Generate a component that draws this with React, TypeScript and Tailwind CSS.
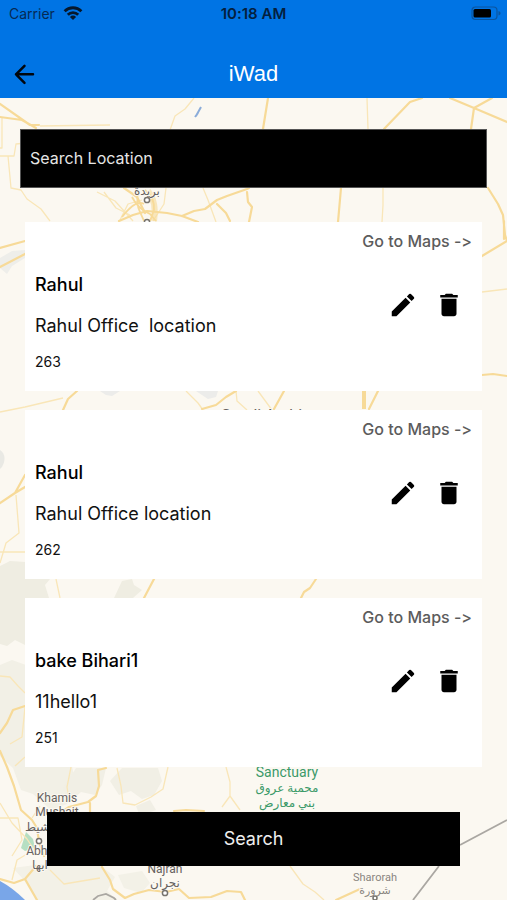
import { MdDelete, MdEdit } from "react-icons/md";

const locations = [
  { id: 263, name: "Rahul", address: "Rahul Office  location" },
  { id: 262, name: "Rahul", address: "Rahul Office location" },
  { id: 251, name: "bake Bihari1", address: "11hello1" },
];

function StatusBar() {
  return <div className="grid h-7 grid-cols-3 items-center px-1 text-sm text-[#062a55]">
    <div className="flex items-center gap-2 pl-[5px]">
      <span>Carrier</span>
      <svg className="h-4 w-5" viewBox="0 0 20 16" fill="none" stroke="#06182c" strokeWidth="2.8" aria-hidden="true">
        <path d="M1.6 5.200a12 12 0 0 1 16.8 0" />
        <path d="M4.8 8.700a7.4 7.4 0 0 1 10.4 0" />
        <path d="M10 14 6.900 10.900a4.4 4.4 0 0 1 6.200 0z" fill="#06182c" stroke="none" />
      </svg>
    </div>
    <span className="text-center text-[15px] font-semibold text-[#04203f]">10:18 AM</span>
    <svg className="h-4 w-8 justify-self-end" viewBox="0 0 32 16" aria-hidden="true">
      <rect x="1" y="1" width="25" height="12.5" rx="3.5" fill="none" stroke="#0a559f" strokeWidth="1.2" />
      <rect x="2.5" y="3" width="17.500" height="8.5" rx="1.5" fill="#000" />
      <path d="M27.500 5c1.600.5 2 1.500 2 2.300s-.4 1.800-2 2.300z" fill="#0a559f" />
    </svg>
  </div>;
}

function Header() {
  return <header className="relative z-10 bg-[#0074e4]">
    <StatusBar />
    <div className="grid h-[70px] grid-cols-3 items-center px-3 pt-[22px]">
      <button type="button" aria-label="Back" className="h-6 w-6">
        <svg viewBox="0 0 24 24" fill="none" stroke="#00060e" strokeWidth="2.5" strokeLinecap="round" strokeLinejoin="round">
          <path d="M12.500 3.800 4 12.300l8.500 8.500M4 12.300h17" />
        </svg>
      </button>
      <h1 className="text-center font-['Liberation_Sans',sans-serif] text-[22px] leading-6 text-white">iWad</h1>
    </div>
  </header>;
}

function MapBackground() {
  return <svg className="absolute inset-0 h-full w-full" viewBox="0 98 507 802" preserveAspectRatio="xMidYMid slice" aria-hidden="true">
    <rect y="98" width="507" height="802" fill="#fbf8f1" />
    <g fill="#efede2">
      <path d="M0 258l12-7 13-1v8l-13 8-5 8-7-6z" fill="#eeeeea" />
      <path d="M0 450q8 6 2 17l-2 2z" fill="#e9e9e4" />
      <path d="M0 566l10-5 16 1v17h24l-5 6 4 13H25v47l-10-5-8 6-7-2z" />
      <path d="M114 598l8-17 10-2 2 6 8 5-9 8z" />
      <path d="M0 665l12-5 14 5v92h34l12 9 4 20-9 18-16 6-18-16-12-4-8-22-13-12z" fill="#f2f0e6" />
      <path d="M76 768h30l-4 17-7 10-14-3-10 9-8-12zM122 768h36l4 13-8 14-12 4-11-8-12 4-9-14zM136 806l14-6 6 10-16 6z" fill="#f1efe5" />
      <path d="M13 868l30-4 58 2 14 11-8 14 10 9H36l-12-20zM118 875l24-4 8 12-9 10-17-5z" fill="#f3f1e7" />
      <path d="M100 391h20l-8 5-6-1zM196 391h22l-2 6-8 2z" fill="#ececea" />
    </g>
    <path d="M26 832l7 7 2 9-10 3-4-3z" fill="#b6dfc2" />
    <path d="M0 881q13 7 25 19H0z" fill="#79a6e8" />
    <path d="M196 116l5-9M195 117l3-4" stroke="#8bacd9" strokeWidth="2" fill="none" />

    <g fill="none" stroke="#f9e6b8" strokeWidth="1.300" strokeLinejoin="round">
      <path d="M170 130l5-14 10-7 9-11M367 98l1 31M40 126l70-1M2 118v30h-2M0 156h14l2-12 10-1M8 156l3 32 10 2 6 9 14 10 9 12M97 192l18 9 18 20M104 192l12 16 14 7M166 188l-2 16-11 17M203 188l5 12 8 22M383 188v17l-1 17M120 220l8-16 14-4" />
      <path d="M0 412l25-5 38-9M482 292l25-3M186 391l12 12 5 7M236 391l1 10 10 9M258 391l14 19" />
      <path d="M16 495l3 38-13 10-6 20M0 552h26M56 579l4 19M0 676l10 1 8 9 7 7M25 707l-3 30-12 7" />
      <path d="M117 768l4 18 2 17 12 2 16-8 12-8 5-22M226 767l4 15v14l-8 11M230 796l10 14M25 757l-10 9M71 767l-4 20 2 12" />
      <path d="M0 803l12 20 15 16 8 12M0 818h18l4 22-10 16M12 880l5-20 20-12M290 866l13 18 12 8 9 8M50 870l14 14 36-6M40 806l-8 12" />
    </g>

    <g fill="none" stroke="#f7da98" strokeWidth="2.200" strokeLinejoin="round" strokeLinecap="round">
      <path d="M0 104l30 21h9M0 117l22 3 14 8M268 98l-5 31M384 129l26-27 12-4M450 98l24 10 33 14M492 98l-18 10-3 21M488 188l10 16 5 11 2 20 2 6M482 256l25-15M504 221v18" />
      <path d="M341 188l-3 34M124 188l13 9 8 16M119 221l14-6 14-4 20 2 15 3 16 6M182 216l12-5 11-2 12-9 10-4 20-7 2-1M247 192l1 10 4 5-3 15M217 204l9 9 4 8" />
      <path d="M0 248l25-7M0 267l25-13M63 410l5-11 9-8M202 409l14-4 10-8 10-6M274 409l10-18M369 409l9-18M482 375l11-1 14 2" />
      <path d="M364 391v18" strokeWidth="4" strokeLinecap="butt" />
      <path d="M0 503l15-10 10-18M15 493l10-6M144 598l10-19M301 598l3-6 6-4 6-9" />
      <path d="M0 733l7-10 6-13 12-4M0 751l7 16 7 19 7 24 11 10 5 8 2 14 5 14M106 768l-8 2 1 16-3 10-8 6-19 5-12 8M90 803v10M174 811l12-1 18 1" />
      <path d="M0 879l14 4 11-4 11-13M25 879l12 21M102 867l8 13 3 9 12 9 9-4 15-4 17 2 13-3 10 9 22-1 16-6 14 1 5 10M336 900l24-11" />
    </g>
    <g fill="none" stroke="#f7da98">
      <path d="M138 190q-2 15 2 22l4 9M145 190q10 8 9 20l-4 11M132 197q6 12 18 17l6 7M122 217q14-18 22-13" strokeWidth="1.800" />
      <path d="M148 191q9 11 6 30" strokeWidth="6" opacity=".6" />
    </g>
    <path d="M460 845l47-25M439 866l-26 34M93 900l5-4 8-2 8 4 2 2" fill="none" stroke="#aaa7a2" strokeWidth="1.800" />

    <g className="font-[Roboto,'DejaVu_Sans',sans-serif]" fill="#66615e" fontSize="12" textAnchor="middle" stroke="#fbf8f1" strokeWidth="2" paintOrder="stroke">
      <text x="147" y="195">بريدة</text>
      <text x="266" y="421" fontSize="16">Saudi Arabia</text>
      <text x="57" y="802">Khamis</text>
      <text x="57" y="816">Mushait</text>
      <text x="41" y="831">مشيط</text>
      <text x="40" y="855">Abha</text>
      <text x="40" y="869">ابها</text>
      <text x="165" y="873">Najran</text>
      <text x="165" y="887">نجران</text>
      <g fill="#89847f">
        <text x="375" y="881" fontSize="11">Sharorah</text>
        <text x="375" y="894" fontSize="11">شرورة</text>
      </g>
      <g fill="#3c9a69">
        <text x="287" y="777" fontSize="14">Sanctuary</text>
        <text x="287" y="792">محمية عروق</text>
        <text x="287" y="807">بني معارض</text>
      </g>
    </g>
    <g fill="#fff" stroke="#77736d" strokeWidth="1.500">
      <circle cx="147" cy="200" r="2.600" />
      <circle cx="147" cy="222" r="2.600" />
      <circle cx="39" cy="841" r="2.600" />
      <circle cx="165" cy="893" r="2.600" />
      <circle cx="375" cy="898" r="2" />
    </g>
  </svg>;
}

function LocationCard({ id, name, address }: { id: number; name: string; address: string }) {
  return <li className="bg-white px-[10px] pb-[17px] pt-2">
    <div className="flex justify-end">
      <a href="#maps" className="text-base font-medium leading-[22px] text-[#5c5c5c]">Go to Maps -&gt;</a>
    </div>
    <div className="flex items-start justify-between pt-5">
      <div className="text-[#111]">
        <h2 className="text-lg font-medium leading-[26px] text-black">{name}</h2>
        <p className="mt-4 whitespace-pre text-lg leading-6">{address}</p>
        <p className="mt-3 text-sm leading-6">{id}</p>
      </div>
      <div className="mr-2 mt-[18px] flex gap-4 text-black">
        <button type="button" aria-label="Edit"><MdEdit size={30} /></button>
        <button type="button" aria-label="Delete"><MdDelete size={30} /></button>
      </div>
    </div>
  </li>;
}

export default function App() {
  return <div className="flex min-h-dvh flex-col font-[Inter,sans-serif] [font-variant-ligatures:none]">
    <Header />
    <main className="relative flex-1 overflow-hidden px-5 pb-8 pt-[31px]">
      <MapBackground />
      <div className="relative">
        <input
          type="text"
          aria-label="Search Location"
          placeholder="Search Location"
          className="block h-[59px] w-full border border-[#555] bg-black px-[9px] pb-0.5 text-base text-white outline-none placeholder:text-[#e6e6e6]"
        />
        <ul className="mt-[34px] flex flex-col gap-[19px] px-[5px]">
          {locations.map((item) => <LocationCard key={item.id} {...item} />)}
        </ul>
        <div className="mt-[45px] px-[27px]">
          <button type="button" className="h-[54px] w-full bg-black text-lg text-[#eee]">Search</button>
        </div>
      </div>
    </main>
  </div>;
}
